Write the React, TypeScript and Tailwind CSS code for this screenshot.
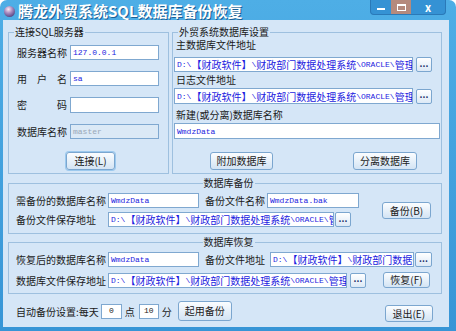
import React from 'react';

const cjk = "font-['Noto_Sans_CJK_SC','Noto_Sans',sans-serif]";
const mono = "font-['Liberation_Mono','Noto_Sans_CJK_SC',monospace]";
const PATH = 'D:\\【财政软件】\\财政部门数据处理系统\\ORACLE\\管理系统\\Data';
const WIDE = /[\u3000-\u9fff\uff00-\uffef]/;

// latin runs in a narrow mono, CJK runs a bit larger, like the old SimSun look
function Mixed({ text }: { text: string }) {
  const parts = text.match(/[\u3000-\u9fff\uff00-\uffef]+|[^\u3000-\u9fff\uff00-\uffef]+/g) ?? [];
  return (
    <>
      {parts.map((p, i) =>
        WIDE.test(p) ? (
          <span key={i} className={`text-[10px] leading-[13px] ${cjk}`}>{p}</span>
        ) : (
          <span key={i} className={`whitespace-pre text-[8px] leading-[13px] ${mono}`}>{p}</span>
        ),
      )}
    </>
  );
}

function Field({ value, className, muted }: { value: string; className: string; muted?: boolean }) {
  return (
    <div
      className={`${className} flex shrink-0 items-center overflow-hidden whitespace-nowrap border border-[#7fa8d0] px-[2px] ${
        muted ? 'bg-[#dbe9f6] text-[#9aa8b6]' : 'bg-white text-[#1c1ce0]'
      }`}
    >
      <Mixed text={value} />
    </div>
  );
}

function Btn({ children, className }: { children: React.ReactNode; className: string }) {
  return (
    <button
      type="button"
      className={`${className} flex shrink-0 items-center justify-center rounded-[3px] border border-[#7ba6cf] bg-linear-to-b from-[#fbfdff] to-[#d3e4f4] text-[10px] leading-none text-[#1a1a1a]`}
    >
      {children}
    </button>
  );
}

function Dots({ className }: { className: string }) {
  return (
    <button
      type="button"
      className={`${className} flex shrink-0 items-center justify-center rounded-[2px] border border-[#7ba6cf] bg-linear-to-b from-white to-[#dce9f6] pb-[3px] text-[9px] font-bold leading-none text-[#1b2f6b]`}
    >
      ...
    </button>
  );
}

function Spread({ chars }: { chars: string[] }) {
  return (
    <div className="flex w-[50px] justify-between text-[10px] leading-[15px]">
      {chars.map((c) => (
        <span key={c}>{c}</span>
      ))}
    </div>
  );
}

function Num({ value, className }: { value: string; className: string }) {
  return (
    <div className={`${className} flex h-[15px] shrink-0 items-center justify-center border border-[#7fa8d0] bg-white text-[8px] text-[#222] ${mono}`}>
      {value}
    </div>
  );
}

function TitleBar() {
  return (
    <div className="flex h-[20px] items-start">
      <svg width="13" height="13" viewBox="0 0 13 13" className="ml-[3px] mt-[5px] shrink-0">
        <defs>
          <radialGradient id="ball" cx="0.4" cy="0.3" r="0.7">
            <stop offset="0" stopColor="#fbe8f2" />
            <stop offset="0.5" stopColor="#a98bc0" />
            <stop offset="1" stopColor="#5a4a86" />
          </radialGradient>
        </defs>
        <circle cx="6.5" cy="6.5" r="5.5" fill="url(#ball)" />
      </svg>
      <div className={`ml-[2px] mt-[2px] text-[15px] font-bold leading-[17px] text-white [text-shadow:1px_1px_0_#1c5f94] ${cjk}`}>
        腾龙外贸系统SQL数据库备份恢复
      </div>
      <div className="ml-auto mr-[10px] flex h-[15px] w-[76px] items-center rounded-b-[4px] border border-t-0 border-[#2a79b8] bg-[#3592d4]">
        <div className="flex w-[20px] items-center justify-center">
          <div className="mt-[4px] h-[2px] w-[8px] bg-white" />
        </div>
        <div className="flex h-full w-[20px] items-center justify-center bg-[#b58a7d]">
          <div className="h-[7px] w-[9px] border-[1.5px] border-t-[2.5px] border-white" />
        </div>
        <div className="flex flex-1 items-center justify-center text-[11px] font-bold leading-none text-white">x</div>
      </div>
    </div>
  );
}

export default function App() {
  return (
    <div className={`flex h-[331px] w-[456px] flex-col rounded-t-[7px] bg-linear-to-b from-[#4eaee6] to-[#3795d6] ${cjk} text-[#1a1a1a]`}>
      <TitleBar />
      <div className="mx-[3px] h-[307px] w-[446px] bg-[#d5e6f7] pl-[5px]">
        <div className="mt-[6px] flex gap-[3px]">
          <fieldset className="h-[148px] w-[161px] border border-[#9ec0df]">
            <legend className="ml-[5px] px-[1px] text-[10px] leading-[12px]">连接SQL服务器</legend>
            <div className="mt-[7px] flex h-[15px] items-center pl-[8px]">
              <div className="w-[50px] text-[10px] leading-[15px]">服务器名称</div>
              <Field value="127.0.0.1" className="ml-[3px] h-[15px] w-[89px]" />
            </div>
            <div className="mt-[11px] flex h-[15px] items-center pl-[8px]">
              <Spread chars={['用', '户', '名']} />
              <Field value="sa" className="ml-[3px] h-[15px] w-[89px]" />
            </div>
            <div className="mt-[11px] flex h-[15px] items-center pl-[8px]">
              <Spread chars={['密', '码']} />
              <Field value="" className="ml-[3px] h-[16px] w-[89px]" />
            </div>
            <div className="mt-[12px] flex h-[15px] items-center pl-[8px]">
              <div className="w-[50px] text-[10px] leading-[15px]">数据库名称</div>
              <Field value="master" muted className="ml-[3px] h-[15px] w-[89px]" />
            </div>
            <Btn className="ml-[57px] mt-[13px] h-[18px] w-[49px] shadow-[0_0_0_1px_#9cc9ee]">连接(L)</Btn>
          </fieldset>

          <fieldset className="h-[148px] w-[270px] border border-[#9ec0df] pl-[1px]">
            <legend className="ml-[4px] px-[1px] text-[10px] leading-[12px]">外贸系统数据库设置</legend>
            <div className="mt-[1px] pl-[2px] text-[10px] leading-[12px]">主数据库文件地址</div>
            <div className="mt-[6px] flex items-center">
              <Field value={PATH} className="h-[15px] w-[239px]" />
              <Dots className="ml-[3px] h-[15px] w-[16px]" />
            </div>
            <div className="mt-[2px] pl-[2px] text-[10px] leading-[12px]">日志文件地址</div>
            <div className="mt-[2px] flex items-center">
              <Field value={PATH} className="h-[16px] w-[239px]" />
              <Dots className="ml-[3px] h-[15px] w-[16px]" />
            </div>
            <div className="mt-[5px] pl-[2px] text-[10px] leading-[12px]">新建(或分离)数据库名称</div>
            <Field value="WmdzData" className="mt-[2px] h-[16px] w-[266px]" />
            <div className="mt-[13px] flex">
              <Btn className="ml-[36px] h-[18px] w-[63px]">附加数据库</Btn>
              <Btn className="ml-[80px] h-[18px] w-[64px]">分离数据库</Btn>
            </div>
          </fieldset>
        </div>

        <fieldset className="mt-[3px] h-[57px] w-[434px] border border-[#9ec0df] pl-[7px]">
          <legend className="mx-auto px-[1px] text-[10px] leading-[12px]">数据库备份</legend>
          <div className="flex">
            <div>
              <div className="mt-[4px] flex h-[15px] items-center">
                <div className="w-[92px] text-[10px] leading-[15px]">需备份的数据库名称</div>
                <Field value="WmdzData" className="h-[15px] w-[91px]" />
                <div className="ml-[6px] w-[62px] text-[10px] leading-[15px]">备份文件名称</div>
                <Field value="WmdzData.bak" className="h-[15px] w-[92px]" />
              </div>
              <div className="mt-[4px] flex h-[15px] items-center">
                <div className="w-[92px] text-[10px] leading-[15px]">备份文件保存地址</div>
                <Field value={PATH} className="h-[15px] w-[226px]" />
                <Dots className="ml-[1px] h-[15px] w-[16px]" />
              </div>
            </div>
            <Btn className="ml-[23px] mt-[13px] h-[17px] w-[49px]">备份(B)</Btn>
          </div>
        </fieldset>

        <fieldset className="mt-[2px] h-[58px] w-[434px] border border-[#9ec0df] pl-[7px]">
          <legend className="mx-auto px-[1px] text-[10px] leading-[12px]">数据库恢复</legend>
          <div className="mt-[4px] flex h-[15px] items-center">
            <div className="w-[92px] text-[10px] leading-[15px]">恢复后的数据库名称</div>
            <Field value="WmdzData" className="h-[15px] w-[91px]" />
            <div className="ml-[6px] w-[65px] text-[10px] leading-[15px]">备份文件地址</div>
            <Field value={PATH} className="h-[15px] w-[144px]" />
            <Dots className="ml-[1px] h-[15px] w-[17px]" />
          </div>
          <div className="mt-[5px] flex h-[16px] items-center">
            <div className="w-[92px] text-[10px] leading-[15px]">数据库文件保存地址</div>
            <Field value={PATH} className="h-[15px] w-[239px]" />
            <Dots className="ml-[3px] h-[15px] w-[16px]" />
            <Btn className="ml-[17px] h-[16px] w-[47px]">恢复(F)</Btn>
          </div>
        </fieldset>

        <div className="mt-[6px] flex h-[22px] items-center">
          <div className="ml-[8px] text-[10px] leading-[15px]">自动备份设置:每天</div>
          <Num value="0" className="ml-[2px] w-[21px]" />
          <div className="ml-[3px] text-[10px] leading-[15px]">点</div>
          <Num value="10" className="ml-[4px] w-[20px]" />
          <div className="ml-[3px] text-[10px] leading-[15px]">分</div>
          <Btn className="ml-[6px] h-[20px] w-[54px]">起用备份</Btn>
          <Btn className="ml-[153px] mt-[5px] h-[17px] w-[48px]">退出(E)</Btn>
        </div>
      </div>
    </div>
  );
}
